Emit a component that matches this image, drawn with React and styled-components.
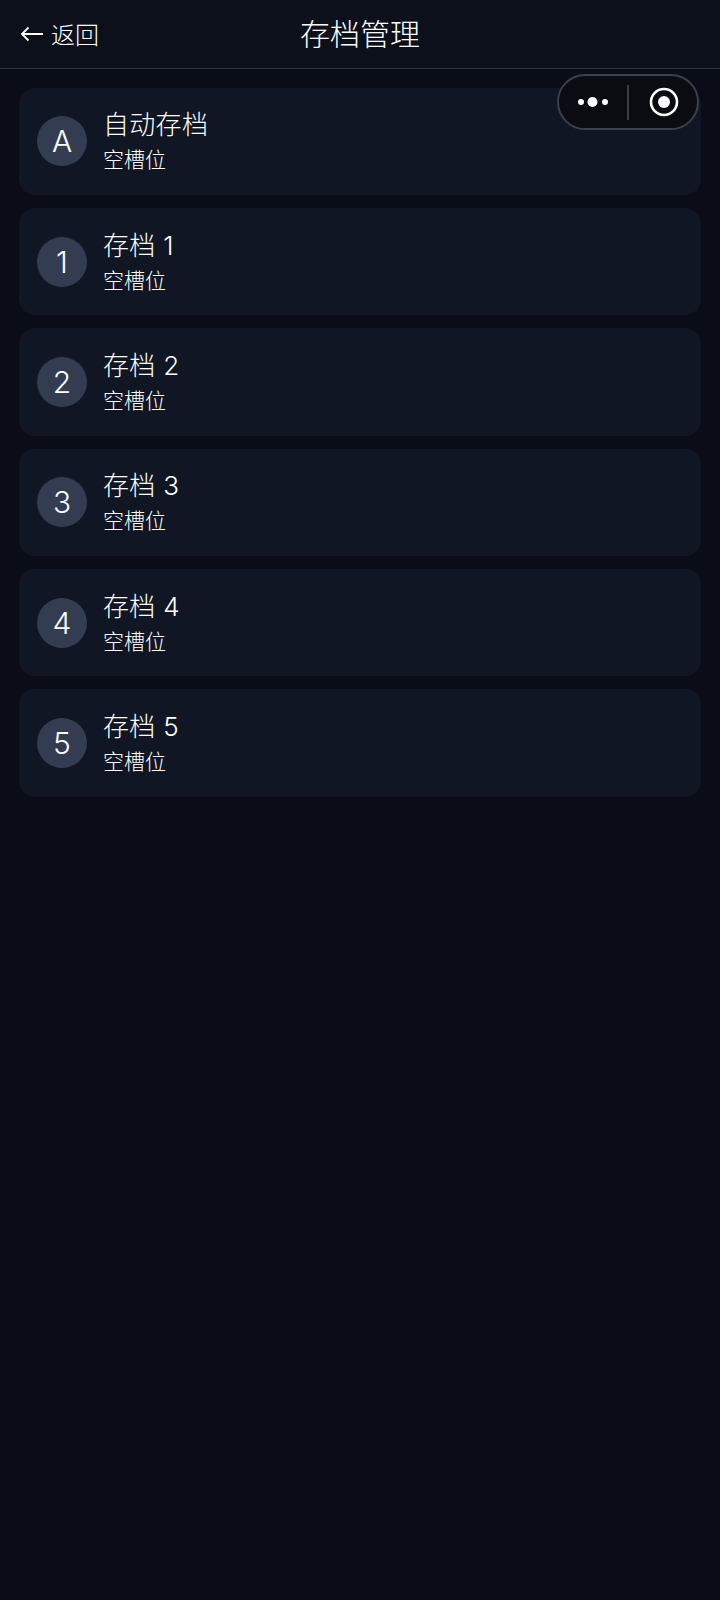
import React from 'react';
import styled, { createGlobalStyle } from 'styled-components';

const GlobalStyle = createGlobalStyle`
  html, body {
    margin: 0;
    padding: 0;
    background: #0a0d17;
  }
  body {
    font-family: Inter, "Noto Sans CJK SC", sans-serif;
    font-weight: 300;
    color: #ffffff;
  }
`;

const Page = styled.div`
  position: relative;
  width: 720px;
  height: 1600px;
  background: #0a0d17;
  overflow: hidden;
`;

const Header = styled.div`
  display: flex;
  align-items: center;
  justify-content: center;
  position: relative;
  height: 69px;
  background: #0c101b;
  border-bottom: 1px solid #2d3140;
  box-sizing: border-box;
`;

const BackButton = styled.div`
  position: absolute;
  left: 20px;
  top: 0;
  bottom: 2px;
  display: flex;
  align-items: center;
  gap: 8px;
  font-size: 24px;
`;

const BackArrow = styled.svg`
  margin-top: 2px;
`;

const Title = styled.div`
  font-size: 30px;
  line-height: 68px;
`;

const Capsule = styled.div`
  position: absolute;
  left: 557px;
  top: 74px;
  width: 142px;
  height: 56px;
  box-sizing: border-box;
  display: flex;
  align-items: center;
  background: #0a0c12;
  border: 2px solid #3d404a;
  border-radius: 28px;
`;

const CapsuleSide = styled.div`
  width: 68px;
  box-sizing: border-box;
  display: flex;
  align-items: center;
  justify-content: center;
  padding-left: ${(props) => props.$inset || 0}px;
`;

const CapsuleLine = styled.div`
  width: 2px;
  height: 35px;
  background: #3a3d46;
`;

const List = styled.div`
  display: flex;
  flex-direction: column;
  gap: 13px;
  padding: 18.5px 19px 0;
`;

const Card = styled.div`
  display: flex;
  align-items: center;
  gap: 16px;
  height: 107.4px;
  padding: 0 18px;
  background: #111624;
  border-radius: 16px;
`;

const Avatar = styled.div`
  width: 50px;
  height: 50px;
  flex-shrink: 0;
  display: flex;
  align-items: center;
  justify-content: center;
  border-radius: 50%;
  background: #343c52;
  font-size: 30px;
`;

const Info = styled.div`
  display: flex;
  flex-direction: column;
  gap: 2px;
`;

const SlotName = styled.div`
  font-size: 26px;
  line-height: 36px;
  letter-spacing: 0.3px;
`;

const SlotState = styled.div`
  font-size: 21px;
  line-height: 30px;
`;

const slots = [
  { badge: 'A', name: '自动存档' },
  { badge: '1', name: '存档 1' },
  { badge: '2', name: '存档 2' },
  { badge: '3', name: '存档 3' },
  { badge: '4', name: '存档 4' },
  { badge: '5', name: '存档 5' },
];

function App() {
  return (
    <Page>
      <GlobalStyle />
      <Header>
        <BackButton>
          <BackArrow width="23" height="16" viewBox="0 0 23 16" fill="none" stroke="#fff" strokeWidth="1.8">
            <path d="M23 8H2M8.5 1.5L2 8l6.5 6.5" />
          </BackArrow>
          返回
        </BackButton>
        <Title>存档管理</Title>
      </Header>
      <List>
        {slots.map((slot) => (
          <Card key={slot.badge}>
            <Avatar>{slot.badge}</Avatar>
            <Info>
              <SlotName>{slot.name}</SlotName>
              <SlotState>空槽位</SlotState>
            </Info>
          </Card>
        ))}
      </List>
      <Capsule>
        <CapsuleSide>
          <svg width="30" height="12" viewBox="0 0 30 12" fill="#fff">
            <circle cx="3" cy="6" r="3" />
            <circle cx="14.5" cy="6" r="5" />
            <circle cx="27" cy="6" r="3" />
          </svg>
        </CapsuleSide>
        <CapsuleLine />
        <CapsuleSide $inset={2}>
          <svg width="30" height="30" viewBox="0 0 30 30" fill="none">
            <circle cx="15" cy="15" r="13" stroke="#fff" strokeWidth="2.6" />
            <circle cx="15" cy="15" r="6" fill="#fff" />
          </svg>
        </CapsuleSide>
      </Capsule>
    </Page>
  );
}

export default App;
